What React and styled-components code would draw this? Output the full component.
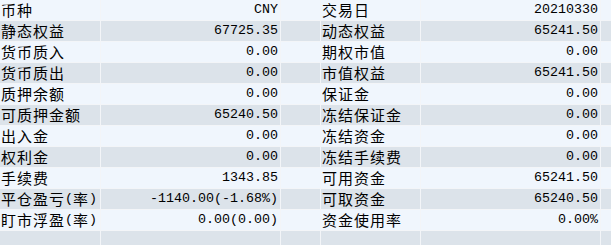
import React from "react";
import styled, { createGlobalStyle } from "styled-components";

const GlobalStyle = createGlobalStyle`
  html, body { margin: 0; padding: 0; background: #ffffff; }
  body { font-family: "Noto Sans CJK SC", "Liberation Sans", sans-serif; }
`;

const Table = styled.div`
  width: 611px;
  height: 245px;
  overflow: hidden;
  display: flex;
  flex-direction: column;
`;

const Row = styled.div`
  display: grid;
  grid-template-columns: 100px 180px 40px 100px 180px 1fr;
  height: 20px;
  flex: 0 0 20px;
  border-bottom: 1px solid #f3f5f8;
  background: ${(p) => (p.$alt ? "#dce3ea" : "#f0f6fd")};
`;

const Cell = styled.div`
  box-sizing: border-box;
  height: 20px;
  display: flex;
  align-items: center;
  white-space: nowrap;
  overflow: hidden;
  color: #000;
  border-left: ${(p) => (p.$first ? "none" : "1px solid #f3f5f8")};
`;

const Label = styled(Cell)`
  padding-left: 1px;
  font-family: "Noto Sans CJK SC", sans-serif;
  font-size: 15px;
  letter-spacing: 1px;
  line-height: 18px;
`;

const Value = styled(Cell)`
  justify-content: flex-end;
  padding-right: 2px;
  font-family: "Liberation Mono", "DejaVu Sans Mono", monospace;
  font-size: 13.33px;
  line-height: 18px;
`;

const Wide = styled.span`
  line-height: 18px;
`;

const Half = styled.span`
  font-family: "Liberation Mono", monospace;
  font-size: 13.33px;
  letter-spacing: 0;
  line-height: 18px;
`;

const LabelText = ({ text }) => {
  const parts = [];
  let buf = "";
  let ascii = null;
  for (const ch of text) {
    const isA = ch.charCodeAt(0) < 128;
    if (ascii === null || isA === ascii) {
      buf += ch;
    } else {
      parts.push({ t: buf, a: ascii });
      buf = ch;
    }
    ascii = isA;
  }
  if (buf) parts.push({ t: buf, a: ascii });
  return parts.map((p, i) =>
    p.a ? <Half key={i}>{p.t}</Half> : <Wide key={i}>{p.t}</Wide>
  );
};

const rows = [
  ["币种", "CNY", "交易日", "20210330"],
  ["静态权益", "67725.35", "动态权益", "65241.50"],
  ["货币质入", "0.00", "期权市值", "0.00"],
  ["货币质出", "0.00", "市值权益", "65241.50"],
  ["质押余额", "0.00", "保证金", "0.00"],
  ["可质押金额", "65240.50", "冻结保证金", "0.00"],
  ["出入金", "0.00", "冻结资金", "0.00"],
  ["权利金", "0.00", "冻结手续费", "0.00"],
  ["手续费", "1343.85", "可用资金", "65241.50"],
  ["平仓盈亏(率)", "-1140.00(-1.68%)", "可取资金", "65240.50"],
  ["盯市浮盈(率)", "0.00(0.00)", "资金使用率", "0.00%"],
  ["", "", "", ""],
];

export default function App() {
  return (
    <>
      <GlobalStyle />
      <Table>
        {rows.map((r, i) => (
          <Row key={i} $alt={i % 2 === 1}>
            <Label $first>
              <LabelText text={r[0]} />
            </Label>
            <Value>{r[1]}</Value>
            <Cell />
            <Label>
              <LabelText text={r[2]} />
            </Label>
            <Value>{r[3]}</Value>
            <Cell />
          </Row>
        ))}
      </Table>
    </>
  );
}
